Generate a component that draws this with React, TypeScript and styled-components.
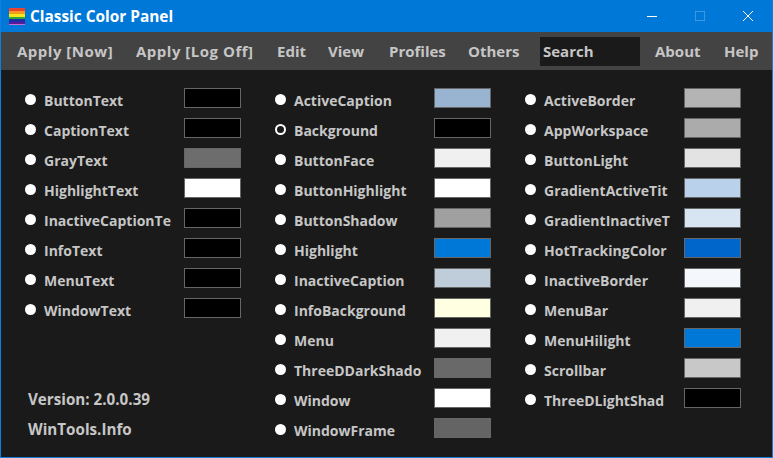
import React from "react";
import styled, { createGlobalStyle } from "styled-components";

const GlobalStyle = createGlobalStyle`
  html, body {
    margin: 0;
    padding: 0;
    background: #1a1a1a;
  }
`;

const FONT = `"Open Sans", "Noto Sans", "Liberation Sans", sans-serif`;

const Win = styled.div`
  width: 773px;
  height: 458px;
  box-sizing: border-box;
  border: 1px solid #0f7fdc;
  border-top: 0;
  display: flex;
  flex-direction: column;
  background: #1a1a1a;
  font-family: ${FONT};
  font-weight: 700;
  overflow: hidden;
`;

const TitleBar = styled.div`
  height: 32px;
  flex: none;
  background: #0078d7;
  display: flex;
  align-items: center;
  padding-left: 8px;
  color: #fff;
  font-size: 15.4px;
`;

const TitleText = styled.span`
  margin-left: 4px;
  flex: 1;
`;

const WinButton = styled.div`
  width: 48px;
  height: 32px;
  display: flex;
  align-items: center;
  justify-content: center;
`;

const MenuBar = styled.div`
  height: 38px;
  flex: none;
  background: #434343;
  display: flex;
  align-items: center;
  padding-left: 16px;
  color: #c6c6c6;
  font-size: 15px;
`;

const MenuItem = styled.span<{ $width: number; $spacing?: number }>`
  width: ${(p) => p.$width}px;
  flex: none;
  letter-spacing: ${(p) => p.$spacing ?? 0}px;
`;

const SearchBox = styled.div`
  width: 97px;
  height: 29px;
  padding-left: 3px;
  margin-right: 15px;
  background: #1a1a1a;
  display: flex;
  align-items: center;
`;

const Body = styled.div`
  flex: 1;
  display: grid;
  grid-template-columns: repeat(3, 250px);
  padding: 15px 0 0 24px;
`;

const Column = styled.div`
  display: flex;
  flex-direction: column;
  height: 360px;
`;

const Row = styled.div`
  height: 30px;
  flex: none;
  display: flex;
  align-items: center;
`;

const Radio = styled.span<{ $checked?: boolean }>`
  width: 11px;
  height: 11px;
  box-sizing: border-box;
  border-radius: 50%;
  flex: none;
  background: ${(p) => (p.$checked ? "#1a1a1a" : "#fff")};
  border: ${(p) => (p.$checked ? "2.5px solid #fff" : "none")};
  margin-top: -2px;
`;

const Label = styled.span`
  width: 126px;
  margin-left: 8px;
  flex: none;
  white-space: nowrap;
  color: #c6c6c6;
  font-size: 14px;
`;

const Swatch = styled.span<{ $color: string }>`
  width: 57px;
  height: 20px;
  margin-left: 14px;
  margin-top: -4px;
  box-sizing: border-box;
  flex: none;
  border: 1px solid #666;
  background: ${(p) => p.$color};
`;

const Footer = styled.div`
  margin-top: auto;
  padding: 0 0 1px 3px;
  color: #c6c6c6;
  font-size: 15.2px;
`;

const FooterLine = styled.div`
  height: 30px;
  display: flex;
  align-items: center;
`;

type Item = [string, string, boolean?];

const columns: Item[][] = [
  [
    ["ButtonText", "#000"],
    ["CaptionText", "#000"],
    ["GrayText", "#6d6d6d"],
    ["HighlightText", "#fff"],
    ["InactiveCaptionTe", "#000"],
    ["InfoText", "#000"],
    ["MenuText", "#000"],
    ["WindowText", "#000"],
  ],
  [
    ["ActiveCaption", "#99b4d1"],
    ["Background", "#000", true],
    ["ButtonFace", "#f0f0f0"],
    ["ButtonHighlight", "#fff"],
    ["ButtonShadow", "#a0a0a0"],
    ["Highlight", "#0078d7"],
    ["InactiveCaption", "#bfcddb"],
    ["InfoBackground", "#ffffe1"],
    ["Menu", "#f0f0f0"],
    ["ThreeDDarkShado", "#696969"],
    ["Window", "#fff"],
    ["WindowFrame", "#646464"],
  ],
  [
    ["ActiveBorder", "#b4b4b4"],
    ["AppWorkspace", "#ababab"],
    ["ButtonLight", "#e3e3e3"],
    ["GradientActiveTit", "#b9d1ea"],
    ["GradientInactiveT", "#d7e4f2"],
    ["HotTrackingColor", "#0066cc"],
    ["InactiveBorder", "#f4f7fc"],
    ["MenuBar", "#f0f0f0"],
    ["MenuHilight", "#0078d7"],
    ["Scrollbar", "#c8c8c8"],
    ["ThreeDLightShad", "#000"],
  ],
];

const Logo = () => (
  <svg width="17" height="17" viewBox="0 0 17 17">
    <rect x="0" y="0" width="16" height="3" fill="#e8432e" />
    <rect x="0" y="3" width="16" height="3" fill="#f59a1e" />
    <rect x="0" y="6" width="16" height="3" fill="#f5e61e" />
    <rect x="0" y="9" width="16" height="2" fill="#2fa83a" />
    <rect x="0" y="11" width="16" height="3" fill="#1c2fa8" />
    <rect x="0" y="14" width="16" height="2" fill="#5a1a9a" />
    <rect x="0" y="16" width="16" height="1" fill="#c86ad8" />
  </svg>
);

export default function App() {
  return (
    <Win>
      <GlobalStyle />
      <TitleBar>
        <Logo />
        <TitleText>Classic Color Panel</TitleText>
        <WinButton>
          <svg width="10" height="10" viewBox="0 0 10 10">
            <path d="M0 5.5h10" stroke="#fff" strokeWidth="1" />
          </svg>
        </WinButton>
        <WinButton>
          <svg width="10" height="10" viewBox="0 0 10 10">
            <rect x="0.5" y="0.5" width="9" height="9" fill="none" stroke="#3b98e3" />
          </svg>
        </WinButton>
        <WinButton>
          <svg width="10" height="10" viewBox="0 0 10 10">
            <path d="M0 0l10 10M10 0L0 10" stroke="#fff" strokeWidth="1" />
          </svg>
        </WinButton>
      </TitleBar>
      <MenuBar>
        <MenuItem $width={119} $spacing={0.5}>Apply [Now]</MenuItem>
        <MenuItem $width={141} $spacing={0.5}>Apply [Log Off]</MenuItem>
        <MenuItem $width={51}>Edit</MenuItem>
        <MenuItem $width={61}>View</MenuItem>
        <MenuItem $width={79}>Profiles</MenuItem>
        <MenuItem $width={72}>Others</MenuItem>
        <SearchBox>Search</SearchBox>
        <MenuItem $width={69}>About</MenuItem>
        <MenuItem $width={40}>Help</MenuItem>
      </MenuBar>
      <Body>
        {columns.map((col, i) => (
          <Column key={i}>
            {col.map(([name, color, checked]) => (
              <Row key={name}>
                <Radio $checked={checked} />
                <Label>{name}</Label>
                <Swatch $color={color} />
              </Row>
            ))}
            {i === 0 && (
              <Footer>
                <FooterLine>Version: 2.0.0.39</FooterLine>
                <FooterLine>WinTools.Info</FooterLine>
              </Footer>
            )}
          </Column>
        ))}
      </Body>
    </Win>
  );
}
